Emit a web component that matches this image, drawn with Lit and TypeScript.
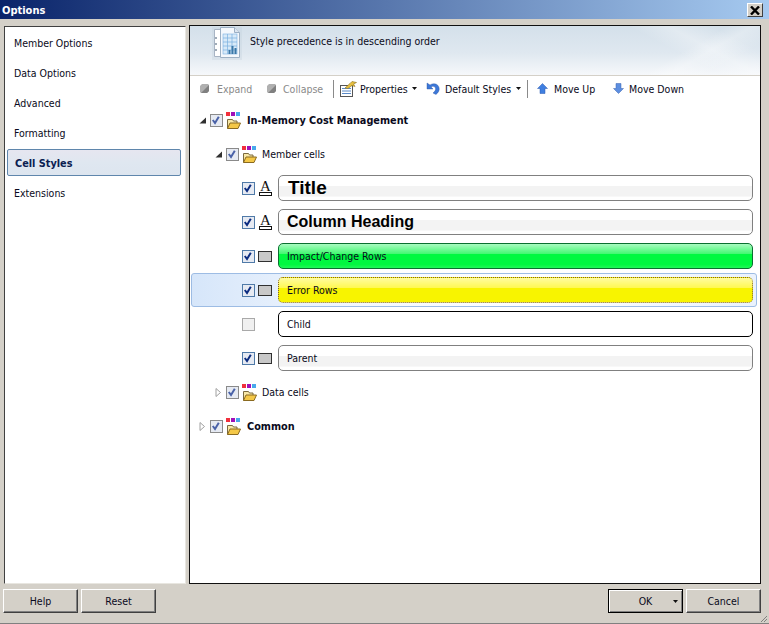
import { LitElement, html, css, svg } from "lit";
import { customElement } from "lit/decorators.js";

const folder = html`<svg class="folder" width="16" height="17" viewBox="0 0 16 17">
  <rect x="0" y="0" width="4" height="4" fill="#f0303c"/>
  <rect x="5" y="0" width="4" height="4" fill="#a010b8"/>
  <rect x="10" y="0" width="4" height="4" fill="#48a8ec"/>
  <path d="M1.5 16.5V7.5h5l1 1.500h3.500v2" fill="#f8e8a8" stroke="#7a6a40"/>
  <path d="M1.500 16.500l2.500-5.500h10.500l-2.500 5.500z" fill="#f4c848" stroke="#8a6a20"/>
</svg>`;

const check = svg`<path d="M2.800 6l2.200 3 3.800-6.200" fill="none" stroke-width="2"/>`;

function box(kind: "group" | "on" | "off") {
  const stroke = kind === "group" ? "#8a8a8a" : kind === "on" ? "#4f7aa8" : "#a9a9a9";
  const fill = kind === "off" ? "#f0f0f0" : "#e6eaf2";
  return html`<svg class="box" width="13" height="13" viewBox="0 0 13 13">
    <rect x=".5" y=".5" width="12" height="12" fill=${fill} stroke=${stroke}/>
    ${kind === "group" ? svg`<g stroke="#4a62a8">${check}</g>` : kind === "on" ? svg`<g stroke="#0c2c80">${check}</g>` : ""}
  </svg>`;
}

const arrowOpen = html`<svg class="arrow" width="7" height="7" viewBox="0 0 7 7"><path d="M7 0.500V6.500H0.500z" fill="#303030"/></svg>`;
const arrowClosed = html`<svg class="arrow" width="7" height="9" viewBox="0 0 7 9"><path d="M1 .5L5.500 4.500 1 8.500z" fill="#fff" stroke="#a0a0a0"/></svg>`;

const fontIcon = html`<span class="fonticon"><span class="a">A</span><span class="u"></span></span>`;
const fillIcon = html`<svg class="ico" width="15" height="11" viewBox="0 0 15 11"><rect x=".5" y=".5" width="13" height="10" fill="#c8c8c8" stroke="#303030"/></svg>`;

const grayDiamond = html`<svg width="11" height="11" viewBox="0 0 11 11"><path d="M3 1h6l1 1v6l-2 2H2L1 9V3z" fill="#b0b0b0"/><path d="M2 10l8-8v6l-2 2z" fill="#808080"/></svg>`;

const propsIcon = html`<svg width="17" height="16" viewBox="0 0 17 16">
  <rect x=".5" y="4.500" width="12" height="11" fill="#fff" stroke="#555"/>
  <path d="M2 7.500h9M2 10h9M2 12.500h9" stroke="#5a8ac8"/>
  <path d="M5 7l5-4.500 2-2 4.500 1-3 1.500 1.500 2.500-3-1-4 3z" fill="#e8c040" stroke="#8a7020" stroke-width=".6"/>
</svg>`;
const undoIcon = html`<svg width="14" height="13" viewBox="0 0 14 13">
  <path d="M1 1v6h6L5 5c2-1.500 4-.5 4.500 1 .5 1.800-.5 3.500-2.500 5l3 1.500c2.500-2 3.800-4.500 3-7C12 2 8 .5 4 3z" fill="#3c78d8" stroke="#2850a0" stroke-width=".4"/>
</svg>`;
const upIcon = html`<svg width="11" height="11" viewBox="0 0 11 11"><path d="M5.500 .5l5 5H8V10.500H3V5.500H.5z" fill="#3f7fe0" stroke="#2a58b0" stroke-width=".5"/></svg>`;
const downIcon = html`<svg width="11" height="11" viewBox="0 0 11 11"><path d="M5.500 10.500l5-5H8V.5H3V5.500H.5z" fill="#5c8ee0" stroke="#3a62b0" stroke-width=".5"/></svg>`;
const caret = html`<svg class="caret" width="5" height="3" viewBox="0 0 5 3"><path d="M0 0h5L2.500 3z" fill="#111"/></svg>`;

const headerIcon = html`<svg width="30" height="35" viewBox="0 0 30 35">
  <rect x="0" y="1" width="30" height="33" fill="#c4d0dc" opacity=".35"/>
  <path d="M2.500 3.500h14l4 4v23h-18z" fill="#fff" stroke="#a8b4c4"/>
  <circle cx="4" cy="12" r="1" fill="#8090a0"/><circle cx="4" cy="18" r="1" fill="#8090a0"/><circle cx="4" cy="24" r="1" fill="#8090a0"/>
  <path d="M8.500 1.500h14l5 5v25h-19z" fill="#f4f8fc" stroke="#9cb0c4"/>
  <path d="M22.500 1.500v5h5" fill="#dde6f0" stroke="#9cb0c4"/>
  <rect x="11" y="8" width="14" height="20" fill="#d8eaf8" stroke="#7ab0e0" stroke-width=".6"/>
  <path d="M11 12h14M11 16h14M11 20h14M11 24h14M15.500 8v20M20 8v20" stroke="#7ab0e0" stroke-width=".7"/>
  <path d="M16.500 28v-4h2v4zM19.500 28v-8h2v8zM22.500 28v-6h2v6z" fill="#3a78a8"/>
</svg>`;

interface Row { level: number; arrow?: "open" | "closed"; label: string; bold?: boolean }

@customElement("app-root")
export class AppRoot extends LitElement {
  static styles = css`
    :host { display: flex; flex-direction: column; width: 769px; height: 624px; background: #d4d0c8;
      font-family: "DejaVu Sans", sans-serif; font-stretch: condensed; font-size: 10.500px; color: #0a0a20; overflow: hidden; position: relative; }
    .title { height: 19px; flex: none; display: flex; align-items: center; justify-content: space-between;
      padding: 1px 5px 0 2px; background: linear-gradient(90deg, #0a246a, #a6caf0); color: #fff; font-weight: bold; font-size: 11px; box-sizing: border-box; }
    .close { width: 16px; height: 14px; box-sizing: border-box; background: #d4d0c8; border: 1px solid; border-color: #fff #404040 #404040 #fff;
      display: flex; align-items: center; justify-content: center; margin-right: 1px; }
    .main { flex: none; height: 559px; margin-top: 6px; display: flex; gap: 3px; padding-left: 4px; box-sizing: border-box; }
    .side { width: 182px; flex: none; margin-top: 1px; box-sizing: border-box; background: #fff; border: 1px solid; border-color: #404040 #e8e6e0 #e8e6e0 #404040;
      padding: 1px 4px 0 2px; display: flex; flex-direction: column; }
    .side div { height: 30px; flex: none; display: flex; align-items: center; padding-left: 7px; box-sizing: border-box; }
    .side .sel { height: 27px; margin: 1px 0 2px; border: 1px solid #5f86ac; border-radius: 2px; background: linear-gradient(#e6e6f0, #dfe7f0 50%, #dde5ef);
      font-weight: bold; font-size: 10.800px; color: #0a2050; padding: 1px 0 0 7px; }
    .panel { width: 572px; flex: none; box-sizing: border-box; background: #fff; border: 1px solid #101010; display: flex; flex-direction: column; }
    .head { height: 49px; flex: none; border-bottom: 1px solid #d4d0c8; box-sizing: content-box;
      background:
        linear-gradient(150deg, transparent 82%, rgba(255,255,255,.28) 86%, transparent 92%),
        linear-gradient(28deg, transparent 80%, rgba(255,255,255,.3) 86%, transparent 93%),
        linear-gradient(#d4e0ea, #dfe8f0 55%, #f6f8fb);
      display: flex; gap: 8px; padding-left: 22px; }
    .head svg { flex: none; }
    .head span { margin-top: 9px; }
    .tools { height: 27px; flex: none; display: flex; align-items: center; padding: 0 0 2px 9px; box-sizing: border-box; }
    .tool { display: inline-flex; align-items: center; gap: 6px; flex: none; }
    .tool.dis { color: #8a8a8a; }
    .sep { width: 1px; height: 18px; background: #8a8a8a; flex: none; }
    .t-exp { width: 67px; gap: 7px; }
    .t-col { width: 67px; }
    .t-prop { margin-left: 6px; gap: 3px; width: 86px; }
    .t-prop .caret { margin-left: 1px; }
    .t-def { width: 101px; gap: 5px; }
    .t-up { margin-left: 9px; width: 76px; }
    .t-down { gap: 5px; }
    .tree { flex: 1; display: flex; flex-direction: column; }
    .row { height: 34px; flex: none; display: flex; align-items: center; box-sizing: border-box; }
    .row.sel { margin: 0 3px 0 1px; border: 1px solid #9dbce4; border-radius: 3px; background: linear-gradient(90deg, #d6e6fa, #f4f8fe 30%, #ffffff 60%, #eaf2fd); }
    .arrow-slot { width: 16px; display: flex; justify-content: center; flex: none; }
    .box { flex: none; }
    .folder { flex: none; margin: 0 5px 0 3px; }
    .lbl { margin-left: -1px; }
    .lbl.b { font-weight: bold; font-size: 10.800px; margin-left: 0; }
    .ico { flex: none; }
    .fonticon { display: flex; flex-direction: column; align-items: center; width: 13px; flex: none; }
    .fonticon .a { font: 15px/12px "Liberation Serif", serif; color: #111; height: 12px; }
    .fonticon .u { width: 13px; height: 4px; box-sizing: border-box; border: 1px solid #111; background: #fff; }
    .style { flex: none; width: 475px; height: 26px; box-sizing: border-box; border: 1px solid #808080; border-radius: 5px; display: flex; align-items: center; padding-left: 8px; margin-left: 4px;
      background: linear-gradient(#fff 0, #fff 40%, #f3f3f3 41%, #f3f3f3 85%, #fff 86%); }
    .style.t { font: bold 19px "Liberation Sans", sans-serif; color: #000; padding-left: 9px; }
    .style.c { font: bold 16px "Liberation Sans", sans-serif; color: #000; }
    .style.g { background: linear-gradient(#a8fcc0 0, #40f870 42%, #00f840 43%, #00f840 85%, #20f858 100%); border-color: #0a7030; }
    .style.y { background: linear-gradient(#fffca0 0, #fff850 42%, #f8f400 43%, #f8f400 100%); border: 1px dotted #806030; }
    .style.k { background: #fff; border-color: #000; }
    .iconcell { width: 17px; display: flex; justify-content: center; flex: none; margin-left: 2px; }
    .foot { flex: 1; display: flex; align-items: flex-start; padding: 5px 8px 0 3px; gap: 3px; border-bottom: 1px solid #808080; }
    .btn { width: 75px; height: 24px; box-sizing: border-box; background: #d4d0c8; border: 1px solid; border-color: #fff #404040 #404040 #fff;
      box-shadow: inset -1px -1px 0 #808080; display: flex; align-items: center; justify-content: center; font-size: 10.500px; position: relative; }
    .btn.ok { border-color: #000; box-shadow: inset 1px 1px 0 #fff, inset -1px -1px 0 #808080; }
    .spacer { flex: 1; }
    .btn .caret { position: absolute; right: 4px; top: 10px; }
    .grip { position: absolute; right: 1px; bottom: 1px; }
  `;

  private styleRow(cls: string, label: string, ic: unknown, cb: "on" | "off", sel = false) {
    return html`<div class="row ${sel ? "sel" : ""}" style="padding-left:${sel ? 50 : 52}px">
      ${box(cb)}
      <span class="iconcell">${ic}</span>
      <div class="style ${cls}">${label}</div>
    </div>`;
  }

  private group(r: Row) {
    return html`<div class="row" style="padding-left:${r.level}px">
      <span class="arrow-slot">${r.arrow === "open" ? arrowOpen : arrowClosed}</span>
      ${box("group")}${folder}
      <span class="lbl ${r.bold ? "b" : ""}">${r.label}</span>
    </div>`;
  }

  render() {
    return html`
      <div class="title"><span>Options</span>
        <span class="close"><svg width="10" height="9" viewBox="0 0 10 9"><path d="M1 .5l8 8M9 .5l-8 8" stroke="#000" stroke-width="2.400"/></svg></span>
      </div>
      <div class="main">
        <div class="side">
          <div>Member Options</div><div>Data Options</div><div>Advanced</div><div>Formatting</div>
          <div class="sel">Cell Styles</div><div>Extensions</div>
        </div>
        <div class="panel">
          <div class="head">${headerIcon}<span>Style precedence is in descending order</span></div>
          <div class="tools">
            <span class="tool dis t-exp">${grayDiamond}Expand</span>
            <span class="tool dis t-col">${grayDiamond}Collapse</span>
            <span class="sep"></span>
            <span class="tool t-prop">${propsIcon}Properties${caret}</span>
            <span class="tool t-def">${undoIcon}Default Styles${caret}</span>
            <span class="sep"></span>
            <span class="tool t-up">${upIcon}Move Up</span>
            <span class="tool t-down">${downIcon}Move Down</span>
          </div>
          <div class="tree">
            ${this.group({ level: 4, arrow: "open", label: "In-Memory Cost Management", bold: true })}
            ${this.group({ level: 20, arrow: "open", label: "Member cells" })}
            ${this.styleRow("t", "Title", fontIcon, "on")}
            ${this.styleRow("c", "Column Heading", fontIcon, "on")}
            ${this.styleRow("g", "Impact/Change Rows", fillIcon, "on")}
            ${this.styleRow("y", "Error Rows", fillIcon, "on", true)}
            ${this.styleRow("k", "Child", html``, "off")}
            ${this.styleRow("", "Parent", fillIcon, "on")}
            ${this.group({ level: 20, arrow: "closed", label: "Data cells" })}
            ${this.group({ level: 4, arrow: "closed", label: "Common", bold: true })}
          </div>
        </div>
      </div>
      <div class="foot">
        <div class="btn">Help</div><div class="btn">Reset</div>
        <div class="spacer"></div>
        <div class="btn ok">OK${caret}</div><div class="btn">Cancel</div>
      </div>
      <svg class="grip" width="8" height="8" viewBox="0 0 8 8"><path d="M7 1L1 7M7 4L4 7" stroke="#808080"/></svg>
    `;
  }
}
